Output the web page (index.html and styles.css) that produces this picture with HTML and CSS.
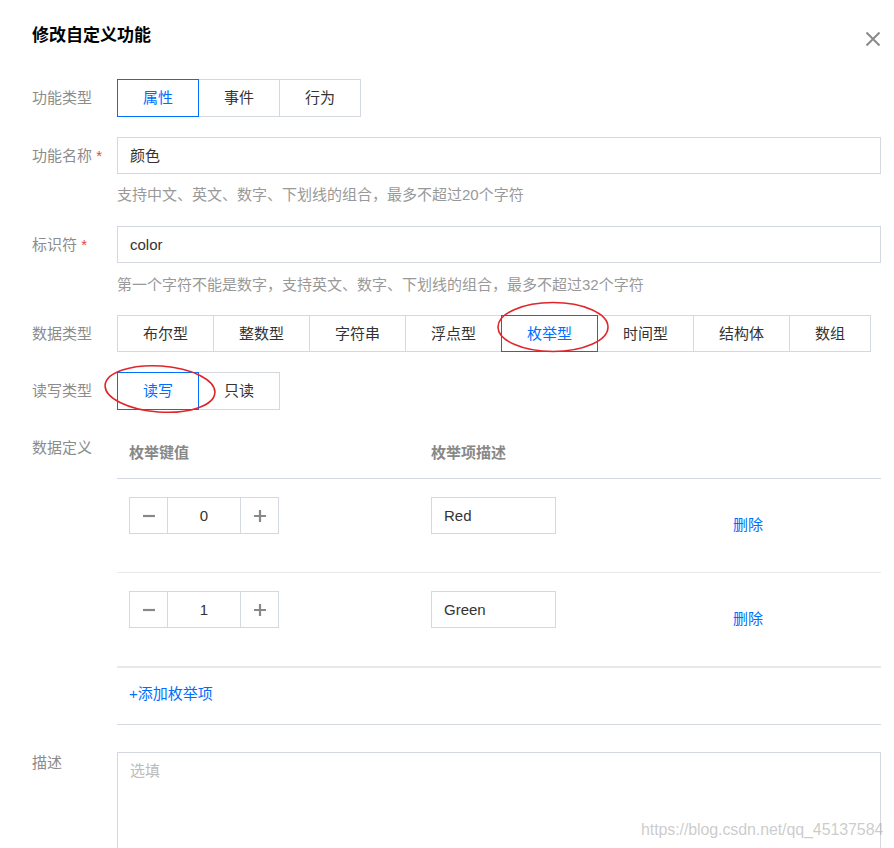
FILE: index.html
```html
<!DOCTYPE html>
<html lang="zh">
<head>
<meta charset="utf-8">
<link rel="stylesheet" href="styles.css">
</head>
<body>
<div class="dialog">
  <h1 class="title">修改自定义功能</h1>
  <button class="close" aria-label="关闭">
    <svg width="16" height="16" viewBox="0 0 16 16"><path d="M1.5 1.5 L14.5 14.5 M14.5 1.5 L1.5 14.5" stroke="#8a8a8a" stroke-width="2" fill="none"/></svg>
  </button>

  <div class="row row-type">
    <div class="label">功能类型</div>
    <div class="group">
      <span class="btn active">属性</span>
      <span class="btn">事件</span>
      <span class="btn">行为</span>
    </div>
  </div>

  <div class="row row-name">
    <div class="label">功能名称 <span class="req">*</span></div>
    <div class="field">
      <div class="input">颜色</div>
      <div class="hint">支持中文、英文、数字、下划线的组合，最多不超过20个字符</div>
    </div>
  </div>

  <div class="row row-id">
    <div class="label">标识符 <span class="req">*</span></div>
    <div class="field">
      <div class="input">color</div>
      <div class="hint">第一个字符不能是数字，支持英文、数字、下划线的组合，最多不超过32个字符</div>
    </div>
  </div>

  <div class="row row-data">
    <div class="label">数据类型</div>
    <div class="group">
      <span class="btn">布尔型</span>
      <span class="btn">整数型</span>
      <span class="btn">字符串</span>
      <span class="btn">浮点型</span>
      <span class="btn active">枚举型</span>
      <span class="btn">时间型</span>
      <span class="btn">结构体</span>
      <span class="btn">数组</span>
    </div>
  </div>

  <div class="row row-rw">
    <div class="label">读写类型</div>
    <div class="group">
      <span class="btn active">读写</span>
      <span class="btn">只读</span>
    </div>
  </div>

  <div class="row row-def">
    <div class="label label-def">数据定义</div>
    <div class="field">
      <div class="enum-head">
        <div class="col">枚举键值</div>
        <div class="col">枚举项描述</div>
      </div>
      <div class="enum-row">
        <div class="col">
          <div class="stepper">
            <span class="step-btn"><svg width="14" height="14" viewBox="0 0 14 14"><path d="M1 7 H13" stroke="#888" stroke-width="2.2"/></svg></span>
            <span class="step-val">0</span>
            <span class="step-btn"><svg width="14" height="14" viewBox="0 0 14 14"><path d="M1 7 H13 M7 1 V13" stroke="#888" stroke-width="2.2"/></svg></span>
          </div>
        </div>
        <div class="col"><div class="desc-input">Red</div></div>
        <div class="col-del"><a class="link">删除</a></div>
      </div>
      <div class="enum-row enum-last">
        <div class="col">
          <div class="stepper">
            <span class="step-btn"><svg width="14" height="14" viewBox="0 0 14 14"><path d="M1 7 H13" stroke="#888" stroke-width="2.2"/></svg></span>
            <span class="step-val">1</span>
            <span class="step-btn"><svg width="14" height="14" viewBox="0 0 14 14"><path d="M1 7 H13 M7 1 V13" stroke="#888" stroke-width="2.2"/></svg></span>
          </div>
        </div>
        <div class="col"><div class="desc-input">Green</div></div>
        <div class="col-del"><a class="link">删除</a></div>
      </div>
      <div class="enum-add"><a class="link">+添加枚举项</a></div>
    </div>
  </div>

  <div class="row row-desc">
    <div class="label label-desc">描述</div>
    <div class="field">
      <div class="textarea"><span class="placeholder">选填</span></div>
    </div>
  </div>

  <svg class="mark mark-enum" width="120" height="56" viewBox="0 0 120 56">
    <ellipse cx="56" cy="27" rx="55" ry="24.5" fill="none" stroke="#e0262b" stroke-width="1.6"/>
  </svg>
  <svg class="mark mark-rw" width="120" height="56" viewBox="0 0 120 56">
    <ellipse cx="57" cy="25" rx="55" ry="23" fill="none" stroke="#e0262b" stroke-width="1.6" transform="rotate(4 57 25)"/>
  </svg>
  <div class="watermark">https://blog.csdn.net/qq_45137584</div>
</div>
</body>
</html>
```

FILE: styles.css
```css
* { box-sizing: border-box; }
html, body { margin: 0; padding: 0; background: #fff; }
body {
  font-family: "Liberation Sans", "Noto Sans CJK SC", sans-serif;
  font-size: 15px;
  color: #333;
  width: 894px;
  height: 848px;
  overflow: hidden;
}
.dialog {
  position: relative;
  padding: 24px 13px 0 32px;
  height: 848px;
  overflow: hidden;
}
.title {
  margin: 0;
  font-size: 17px;
  line-height: 24px;
  font-weight: bold;
  color: #000;
}
.close {
  position: absolute;
  left: 865px;
  top: 31px;
  width: 16px;
  height: 16px;
  padding: 0;
  border: 0;
  background: none;
}
.close svg { display: block; }

.row { display: flex; align-items: flex-start; }
.label {
  width: 85px;
  flex: none;
  color: #8c8c8c;
  line-height: 38px;
  white-space: nowrap;
}
.req { color: #e54545; }
.field { flex: 1; min-width: 0; }

.row-type { margin-top: 31px; }
.row-name { margin-top: 20px; }
.row-id { margin-top: 21px; }
.row-data { margin-top: 20px; }
.row-rw { margin-top: 20px; }
.row-def { margin-top: 23px; }
.row-desc { margin-top: 27px; }

.row-name .label, .row-id .label, .row-data .label { line-height: 37px; }

.group { display: flex; }
.btn {
  height: 38px;
  line-height: 36px;
  padding: 0 25px;
  border: 1px solid #d4d8e0;
  margin-left: -1px;
  color: #333;
  white-space: nowrap;
  background: #fff;
}
.btn:first-child { margin-left: 0; }
.row-data .btn { height: 37px; line-height: 35px; }
.group .btn.active {
  position: relative;
  z-index: 1;
  border-color: #006eff;
  color: #006eff;
}

.input {
  height: 37px;
  line-height: 35px;
  border: 1px solid #d4d8e0;
  padding: 0 12px;
  color: #333;
}
.hint {
  color: #999;
  line-height: 20px;
  margin-top: 11px;
}
.row-id .hint { margin-top: 12px; }

.label-def { line-height: 30px; }
.enum-head {
  display: flex;
  padding: 10px 0 15px 12px;
  line-height: 20px;
  border-bottom: 1px solid #d4d8e0;
  color: #888;
  font-weight: bold;
}
.col { width: 302px; flex: none; }
.enum-row {
  display: flex;
  height: 94px;
  padding: 18px 0 0 12px;
  border-bottom: 1px solid #e6e8ec;
}
.enum-last { height: 95px; border-bottom: 2px solid #e6e8ec; }
.stepper {
  display: flex;
  width: 150px;
  height: 37px;
  border: 1px solid #d4d8e0;
}
.step-btn {
  width: 37px;
  display: flex;
  align-items: center;
  justify-content: center;
}
.step-val {
  width: 74px;
  border-left: 1px solid #d4d8e0;
  border-right: 1px solid #d4d8e0;
  text-align: center;
  line-height: 35px;
  color: #333;
}
.desc-input {
  width: 125px;
  height: 37px;
  line-height: 35px;
  border: 1px solid #d4d8e0;
  padding: 0 12px;
  color: #333;
}
.col-del { flex: 1; padding-top: 18px; line-height: 20px; }
.link { color: #006eff; text-decoration: none; }
.enum-add {
  padding: 16px 0 20px 12px;
  line-height: 20px;
  border-bottom: 1px solid #d4d8e0;
}

.label-desc { line-height: 22px; }
.textarea {
  height: 130px;
  border: 1px solid #d4d8e0;
  padding: 8px 12px;
  line-height: 20px;
}
.placeholder { color: #bbb; }

.mark {
  position: absolute;
  pointer-events: none;
  z-index: 5;
}
.mark-enum { left: 497px; top: 300px; }
.mark-rw { left: 103px; top: 364px; }
.watermark {
  position: absolute;
  left: 641px;
  top: 820px;
  font-size: 16px;
  line-height: 20px;
  color: rgba(160, 160, 160, 0.55);
  letter-spacing: -0.1px;
  white-space: nowrap;
  z-index: 6;
}
```
